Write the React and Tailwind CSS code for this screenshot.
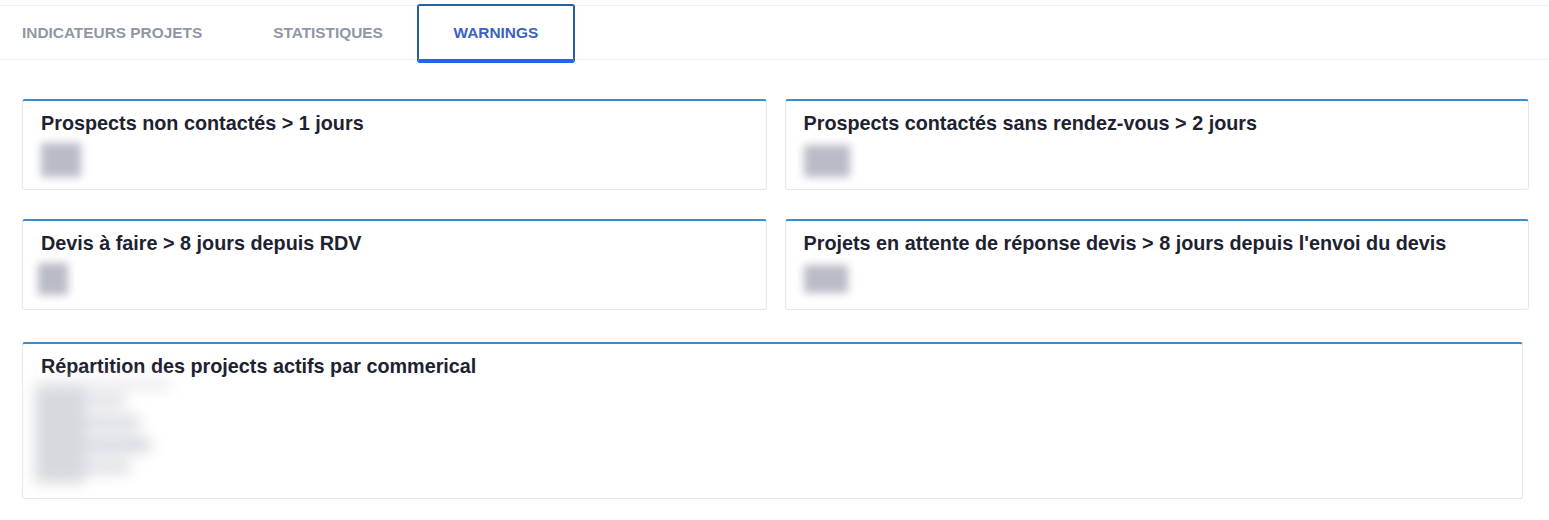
import React from 'react';

const tabs = [
  { label: 'INDICATEURS PROJETS', pad: 'pr-[35px]' },
  { label: 'STATISTIQUES', pad: 'pl-[36px] pr-[34px]' },
  { label: 'WARNINGS', active: true },
];

const Blur = ({ className }) => (
  <div className={`bg-[#b9bcc7] blur-[4px] ${className}`}></div>
);

const WarningCard = ({ title, blur }) => (
  <div className="h-[91px] rounded-[3px] border border-[#e6e8ec] border-t-2 border-t-[#3a8bc9] bg-white pl-[18px] pt-[11px]">
    <h3 className="text-[19.8px] font-bold leading-[23px] text-[#1e2230]">{title}</h3>
    {blur}
  </div>
);

export default function App() {
  return (
    <div className="h-[520px] w-full bg-white pt-[5px] font-['Liberation_Sans',Arial,sans-serif]">
      {/* Tabs */}
      <div className="flex h-[55px] items-stretch border-y border-[#eef0f3] pl-[22px]">
        {tabs.map((tab, i) =>
          tab.active ? (
            <button
              key={i}
              className="-mt-[2px] h-[59px] w-[158px] rounded-[3px] border-2 border-b-[4px] border-[#2a5d9c] border-b-[#2563eb] text-[15.4px] font-bold text-[#3b62c2]"
            >
              {tab.label}
            </button>
          ) : (
            <button key={i} className={`text-[15.4px] font-bold text-[#8f97a6] ${tab.pad}`}>
              {tab.label}
            </button>
          )
        )}
      </div>

      {/* Cards */}
      <div className="grid grid-cols-2 gap-x-[18px] gap-y-[29px] pl-[22px] pr-[20px] pt-[39px]">
        <WarningCard
          title="Prospects non contactés > 1 jours"
          blur={<Blur className="mt-[8px] h-[34px] w-[40px]" />}
        />
        <WarningCard
          title="Prospects contactés sans rendez-vous > 2 jours"
          blur={<Blur className="mt-[10px] h-[32px] w-[46px]" />}
        />
        <WarningCard
          title="Devis à faire > 8 jours depuis RDV"
          blur={<Blur className="-ml-[3px] mt-[8px] h-[32px] w-[30px]" />}
        />
        <WarningCard
          title="Projets en attente de réponse devis > 8 jours depuis l'envoi du devis"
          blur={<Blur className="mt-[10px] h-[28px] w-[44px]" />}
        />
      </div>

      <div className="mt-[32px] ml-[22px] mr-[26px] h-[157px] overflow-hidden rounded-[3px] border border-[#e6e8ec] border-t-2 border-t-[#3a8bc9] bg-white pl-[18px] pt-[11px]">
        <h3 className="text-[19.8px] font-bold leading-[23px] text-[#1e2230]">
          Répartition des projects actifs par commerical
        </h3>
        {/* blurred list */}
        <div className="-ml-[6px] mt-[3px] h-[104px] w-[140px] blur-[7px]">
          <div className="h-[8px] w-[135px] bg-[#e6e7eb]"></div>
          <div className="flex">
            <div className="h-[94px] w-[50px] bg-[#d7d9df]"></div>
            <div className="flex flex-col gap-[6px] pt-[4px]">
              <div className="h-[16px] w-[40px] bg-[#e4e5ea]"></div>
              <div className="h-[16px] w-[55px] bg-[#dedfe5]"></div>
              <div className="h-[16px] w-[65px] bg-[#d8dae0]"></div>
              <div className="h-[16px] w-[45px] bg-[#e2e3e8]"></div>
            </div>
          </div>
        </div>
      </div>
    </div>
  );
}
